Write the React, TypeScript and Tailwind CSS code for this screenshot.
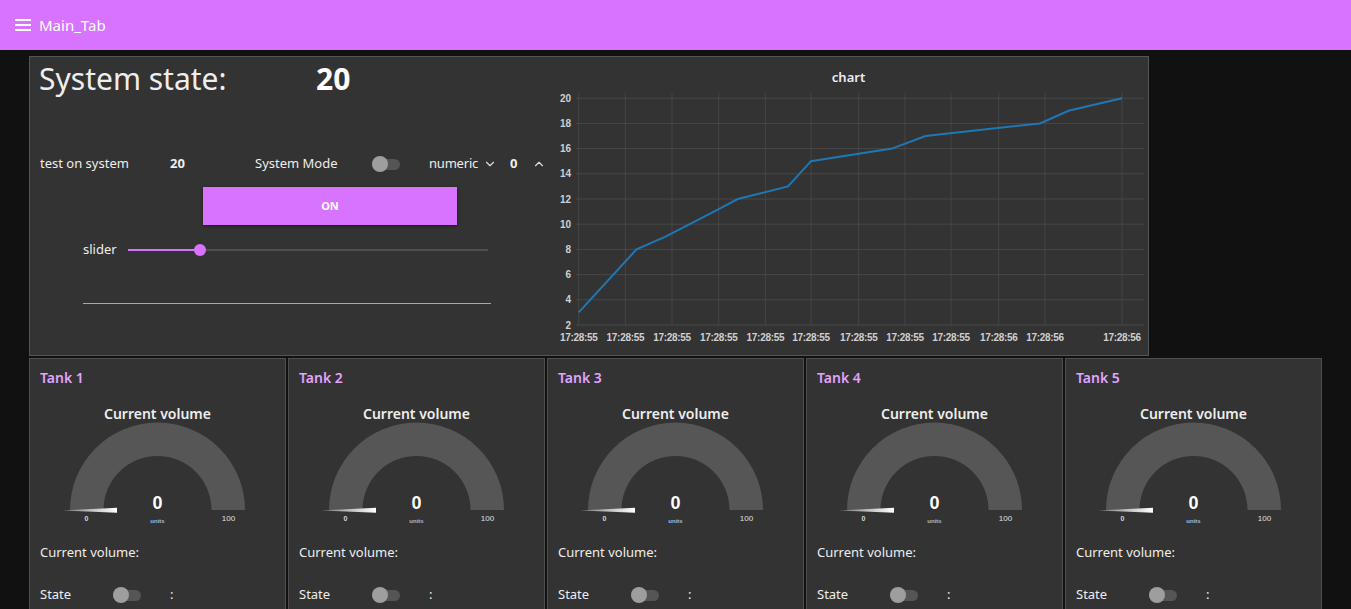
import React from "react";
import { ChevronDown, ChevronUp } from "lucide-react";

const F = "font-['Noto_Sans',sans-serif]";

function Toggle() {
  return (
    <div className="relative w-[28px] h-[16px] flex items-center">
      <div className="w-[28px] h-[11px] rounded-full bg-[#555555]" />
      <div className="absolute left-0 top-0 w-[16px] h-[16px] rounded-full bg-[#9e9e9e]" />
    </div>
  );
}

const gx = [578.7, 625.4, 672, 718.7, 765.4, 811, 858.7, 905, 951, 998.7, 1045, 1122];
const labels = gx.map((_, i) => (i >= 9 ? "17:28:56" : "17:28:55"));
const yv = [2, 4, 6, 8, 10, 12, 14, 16, 18, 20];
const yOf = (v: number) => 238 - (v - 2) * 12.6;
const pts: [number, number][] = [
  [578.7, 3], [636.5, 8], [665, 9], [714, 11], [737.7, 12], [788, 13], [811, 15],
  [892, 16], [925.5, 17], [1040, 18], [1068.6, 19], [1122, 20],
];

function Chart() {
  return (
    <svg width={599} height={268} className="block font-['Liberation_Sans',sans-serif]">
      {gx.map((x, i) => (
        <line key={"v" + i} x1={x - 549} x2={x - 549} y1={6} y2={238} stroke="#454545" strokeWidth={1} />
      ))}
      {yv.map((v) => (
        <line key={"h" + v} x1={27} x2={595} y1={yOf(v)} y2={yOf(v)} stroke="#484848" strokeWidth={1} />
      ))}
      {yv.map((v) => (
        <text key={"t" + v} x={22} y={yOf(v) + 3.5} textAnchor="end" fontSize={10} fontWeight={700} fill="#d0d0d0">
          {v}
        </text>
      ))}
      {gx.map((x, i) => (
        <text key={"l" + i} x={x - 549} y={254} textAnchor="middle" fontSize={10} fontWeight={700} fill="#d0d0d0" letterSpacing={-0.3}>
          {labels[i]}
        </text>
      ))}
      <polyline
        points={pts.map(([x, v]) => `${x - 549},${yOf(v)}`).join(" ")}
        fill="none"
        stroke="#1f77b4"
        strokeWidth={2}
      />
    </svg>
  );
}

function Gauge({ id }: { id: number }) {
  const cx = 127.5;
  const cy = 86;
  const R = 87.5;
  const r = 54;
  return (
    <svg width={255} height={105} className="block overflow-visible font-['Liberation_Sans',sans-serif]">
      <defs>
        <linearGradient id={"ng" + id} x1="0" x2="1" y1="0" y2="0">
          <stop offset="0" stopColor="#777777" />
          <stop offset="1" stopColor="#ffffff" />
        </linearGradient>
      </defs>
      <path
        d={`M ${cx - R} ${cy} A ${R} ${R} 0 0 1 ${cx + R} ${cy} L ${cx + r} ${cy} A ${r} ${r} 0 0 0 ${cx - r} ${cy} Z`}
        fill="#565656"
      />
      <polygon points="32,86.5 87,83.7 87,88.7" fill={`url(#ng${id})`} />
      <text x={cx} y={85} textAnchor="middle" fontSize={18} fontWeight={700} fill="#ffffff">0</text>
      <text x={56.5} y={97} textAnchor="middle" fontSize={7} fontWeight={700} fill="#d8d8d8">0</text>
      <text x={cx} y={99} textAnchor="middle" fontSize={6} fontWeight={700} fill="#a9b8d0">units</text>
      <text x={198.5} y={97} textAnchor="middle" fontSize={8} fill="#e0e0e0">100</text>
    </svg>
  );
}

function Tank({ n }: { n: number }) {
  return (
    <div className="w-[257px] h-[262px] shrink-0 border border-[#4f4f4f] bg-[#333333]">
      <div className="pt-[9px] pl-[10px] h-[29px] leading-[20px] text-[14px] font-semibold text-[#e2a4ff]">Tank {n}</div>
      <div className="mt-[16px] h-[20px] leading-[20px] text-center text-[14px] font-semibold text-[#eeeeee]">Current volume</div>
      <Gauge id={n} />
      <div className="mt-[13px] pl-[10px] h-[20px] leading-[20px] text-[13px] text-[#eeeeee]">Current volume:</div>
      <div className="mt-[23px] pl-[10px] h-[20px] flex items-center text-[13px] text-[#eeeeee]">
        <div className="w-[73px]">State</div>
        <Toggle />
        <div className="ml-[29px]">:</div>
      </div>
    </div>
  );
}

export default function App() {
  return (
    <div className={`${F} w-[1351px] h-[609px] overflow-hidden bg-[#111111] text-[#eeeeee]`}>
      <div className="h-[50px] bg-[#d873ff] flex items-center pl-[15px]">
        <svg width={16} height={12} viewBox="0 0 16 12" className="block">
          <rect x={0} y={0} width={16} height={2} fill="#ffffff" />
          <rect x={0} y={5} width={16} height={2} fill="#ffffff" />
          <rect x={0} y={10} width={16} height={2} fill="#ffffff" />
        </svg>
        <div className="ml-[8px] text-[15px] text-white leading-[20px]">Main_Tab</div>
      </div>
      <div className="pl-[29px] pt-[6px]">
        <div className="w-[1120px] h-[300px] border border-[#555555] bg-[#333333] flex">
          <div className="w-[519px] shrink-0">
            <div className="h-[44px] flex items-center pl-[9px]">
              <div className="w-[277px] text-[30px] text-[#eeeeee] leading-[40px]">System state:</div>
              <div className="text-[30px] font-bold text-white leading-[40px]">20</div>
            </div>
            <div className="mt-[53px] h-[20px] flex items-center pl-[10px] text-[13px]">
              <div className="w-[130px]">test on system</div>
              <div className="w-[85px] font-bold">20</div>
              <div className="w-[117px]">System Mode</div>
              <div className="w-[57px]"><Toggle /></div>
              <div className="w-[54px] tracking-[-0.2px]">numeric</div>
              <div className="w-[27px]"><ChevronDown size={14} strokeWidth={2} color="#dddddd" /></div>
              <div className="w-[22px] font-bold">0</div>
              <ChevronUp size={14} strokeWidth={2} color="#dddddd" />
            </div>
            <div className="mt-[13px] ml-[173px] w-[254px] h-[38px] bg-[#d873ff] shadow-[0_1px_3px_rgba(0,0,0,0.5)] flex items-center justify-center text-[11px] font-bold text-white">
              ON
            </div>
            <div className="mt-[15px] h-[20px] flex items-center pl-[53px] text-[13px]">
              <div className="w-[45px]">slider</div>
              <div className="relative w-[360px] h-[12px] flex items-center">
                <div className="w-[72px] h-[2px] bg-[#d873ff]" />
                <div className="flex-1 h-[2px] bg-[#4f4f4f]" />
                <div className="absolute left-[66px] top-0 w-[12px] h-[12px] rounded-full bg-[#d873ff]" />
              </div>
            </div>
            <div className="mt-[43px] ml-[53px] w-[408px] h-[1px] bg-[#c68fe0]" />
          </div>
          <div className="flex-1">
            <div className="pt-[10px] h-[30px] leading-[20px] text-center text-[13px] font-semibold text-[#eeeeee]">chart</div>
            <Chart />
          </div>
        </div>
        <div className="mt-[2px] flex gap-[2px]">
          {[1, 2, 3, 4, 5].map((n) => (
            <Tank key={n} n={n} />
          ))}
        </div>
      </div>
    </div>
  );
}
